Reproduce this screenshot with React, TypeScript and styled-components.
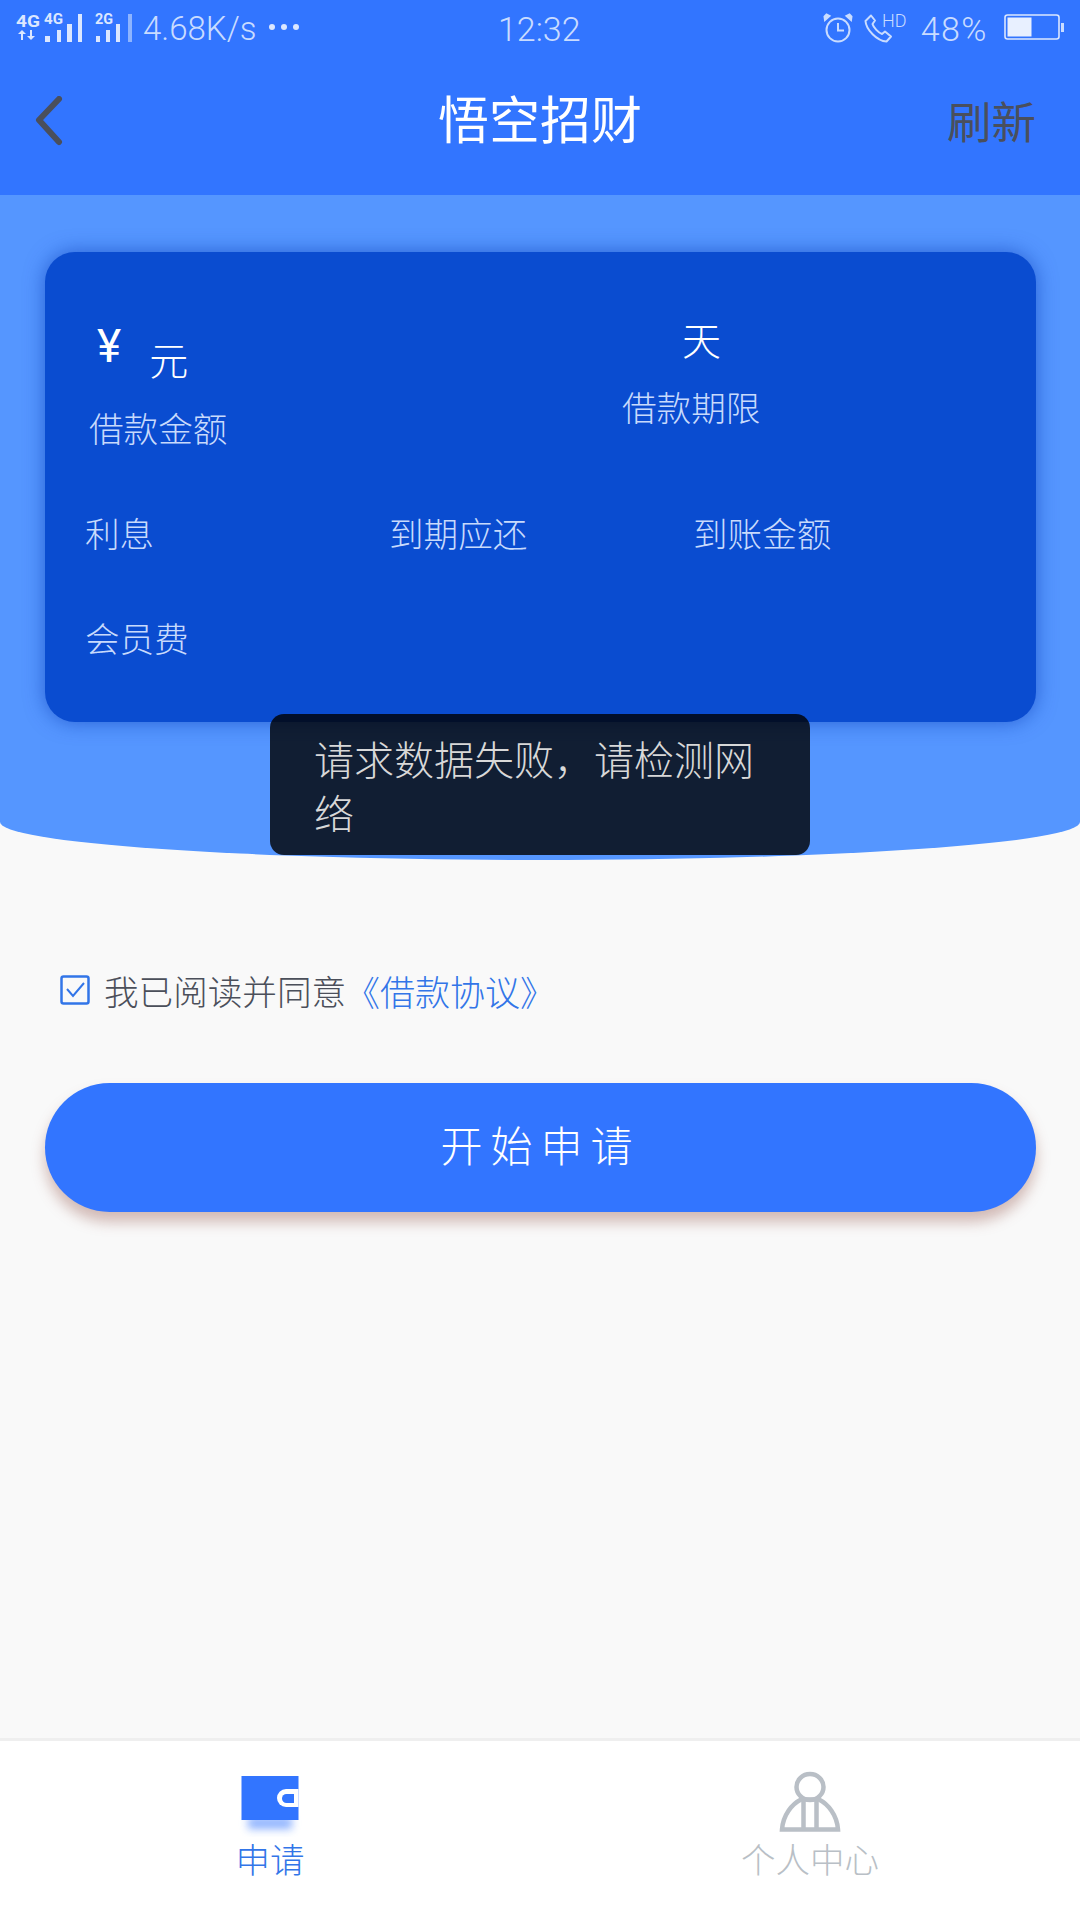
import React from 'react';
import styled, { createGlobalStyle } from 'styled-components';

const Global = createGlobalStyle`
  html, body { margin: 0; padding: 0; background: #f9f9f9; }
  body { font-family: "Noto Sans CJK SC", "Noto Sans", sans-serif; font-weight: 300; }
  * { box-sizing: border-box; }
`;
const Page = styled.div`
  position: relative; width: 1080px; height: 1920px; overflow: hidden;
  display: flex; flex-direction: column; background: #f9f9f9;
`;
const Header = styled.header`
  height: 195px; flex: none; background: #3275ff; display: flex; flex-direction: column;
`;
const StatusBar = styled.div`
  height: 58px; position: relative; display: flex; align-items: center; justify-content: space-between;
  padding: 0 16px 0 14px; color: #c9dcff; font-family: Roboto, sans-serif; font-size: 33px; font-weight: 300;
`;
const StatusGroup = styled.div`
  display: flex; align-items: center;
`;
const Speed = styled.span`
  margin-left: 9px; line-height: 58px; white-space: nowrap;
`;
const Clock = styled.span`
  position: absolute; left: 498px; top: 0; line-height: 58px; font-size: 34px;
`;
const Percent = styled.span`
  margin: 0 16px 0 13px; line-height: 58px; font-size: 34px; letter-spacing: 1.500px;
`;
const Toolbar = styled.div`
  flex: 1; display: flex; align-items: center; justify-content: space-between; padding: 0 44px 12px 34px; position: relative;
`;
const Title = styled.h1`
  position: absolute; left: 0; right: 0; top: 0; margin: 0; text-align: center; color: #fff;
  font-size: 51px; font-weight: 400; line-height: 118px;
`;
const Refresh = styled.span`
  font-size: 44.500px; color: #4a4f5c; font-weight: 400; line-height: 1;
`;
const Hero = styled.section`
  flex: none; height: 665px; padding: 57px 44px 0 45px; background: #5596ff;
  border-radius: 0 0 50% 50% / 0 0 38px 38px;
`;
const Card = styled.div`
  height: 470px; background: #0a4cd0; border-radius: 30px; box-shadow: 0 0 20px rgba(10, 60, 180, .6);
  padding: 68px 40px 0; color: #c8dafc; font-size: 34.600px;
`;
const TopRow = styled.div`
  display: flex; height: 153px;
`;
const AmountCol = styled.div`
  width: 537px; padding-left: 4px;
`;
const TermCol = styled.div`
  flex: 1; display: flex; flex-direction: column;
`;
const Value = styled.div<{ $fit?: boolean }>`
  display: flex; color: #fff; align-items: flex-start; height: ${p => (p.$fit ? 'auto' : '72px')};
`;
const Yen = styled.span`
  font-size: 46px; line-height: 52px; margin: 0 28px 0 8px; font-family: Roboto, sans-serif; font-weight: 400;
`;
const Unit = styled.span<{ $top: number; $left: number }>`
  font-size: 39px; line-height: 44px; margin-top: ${p => p.$top}px; margin-left: ${p => p.$left}px;
`;
const Label = styled.div<{ $offset?: number }>`
  line-height: 44px; white-space: nowrap; margin-top: ${p => p.$offset ?? 0}px;
`;
const InfoGrid = styled.div`
  display: grid; grid-template-columns: repeat(3, 304px); row-gap: 61px; margin-top: 37px;
`;
const Agreement = styled.div`
  display: flex; align-items: center; margin: 108px 0 0 60px; height: 44px; font-size: 34.600px; color: #4b4f5a; white-space: nowrap;
`;
const Check = styled.svg`
  width: 30px; height: 30px; margin-right: 14px; flex: none;
`;
const Link = styled.span`
  color: #3275e8; margin-left: -1px; font-size: 35px; font-weight: 300;
`;
const Button = styled.button`
  display: block; width: 991px; height: 129px; margin: 71px 0 0 45px; border: 0; border-radius: 65px; padding: 0 0 8px;
  background: #3275ff; color: #fff; font: 300 42px "Noto Sans CJK SC", sans-serif; letter-spacing: 8px;
  box-shadow: 0 10px 14px rgba(150, 90, 80, .4);
`;
const Toast = styled.div`
  position: absolute; left: 270px; top: 714px; width: 540px; height: 141px; padding: 17px 44px;
  background: rgba(0, 0, 0, .8); border-radius: 14px; color: #d8d8d8; font-size: 40px; line-height: 54px;
`;
const Nav = styled.nav`
  margin-top: auto; height: 182px; background: #fff; border-top: 3px solid #efefef; display: grid; grid-template-columns: 1fr 1fr; flex: none;
`;
const NavItem = styled.div<{ $active?: boolean }>`
  display: flex; flex-direction: column; align-items: center; padding-top: 30px;
  color: ${p => (p.$active ? '#3275e8' : '#b9bfc6')}; font-size: 34.500px;
`;
const NavIcon = styled.svg`
  width: 80px; height: 62px; flex: none; overflow: visible;
`;
const NavLabel = styled.span`
  line-height: 44px; margin-top: 3px; white-space: nowrap;
`;
const StatusSvg = styled.svg<{ $top?: number; $left?: number }>`
  flex: none; overflow: visible; margin-top: ${p => p.$top ?? 0}px; margin-left: ${p => p.$left ?? 0}px;
`;

const SignalIcon = () => (
  <StatusSvg width="120" height="30" viewBox="0 0 120 30" $top={-2}>
    <g fill="#dbe7ff" fontFamily="Roboto, sans-serif" fontWeight="700">
      <text x="2" y="14" fontSize="16" textLength="24" lengthAdjust="spacingAndGlyphs">4G</text>
      <text x="30" y="11" fontSize="14" textLength="19" lengthAdjust="spacingAndGlyphs">4G</text>
      <text x="81" y="11" fontSize="14" textLength="18" lengthAdjust="spacingAndGlyphs">2G</text>
      <path d="M7 27v-6H4l4-4 4 4H9v6zM16 17v6h-3l4 4 4-4h-3v-6z" />
      <rect x="31" y="23" width="5" height="6" />
      <rect x="43" y="17" width="4" height="12" />
      <rect x="53" y="11" width="5" height="18" />
      <rect x="64" y="1" width="4" height="28" />
      <rect x="82" y="23" width="4" height="6" />
      <rect x="92" y="17" width="4" height="12" />
      <rect x="102" y="11" width="4" height="18" />
      <rect x="114" y="1" width="4" height="28" opacity=".55" />
    </g>
  </StatusSvg>
);
const Dots = () => (
  <StatusSvg width="32" height="8" viewBox="0 0 32 8" $left={11} $top={-5}>
    <g fill="#dbe7ff"><circle cx="4" cy="4" r="3" /><circle cx="16" cy="4" r="3" /><circle cx="28" cy="4" r="3" /></g>
  </StatusSvg>
);
const AlarmIcon = () => (
  <StatusSvg width="30" height="30" viewBox="0 0 30 30" fill="none" stroke="#c9dcff" strokeWidth="2" $top={-3}>
    <circle cx="15" cy="17" r="11.500" />
    <path d="M15 10v7.500h6" />
    <path d="M2 7 6.500 3 3.500 1.500 1.500 3.500zM28 7l-4.500-4 3-1.500 2 2z" fill="#c9dcff" />
  </StatusSvg>
);
const CallIcon = () => (
  <StatusSvg width="44" height="32" viewBox="0 0 44 32" $left={11}>
    <path d="M1.500 8 7 2.500l4 5-2.500 3.500c1 3.500 6 9 9.500 10l3-2.500 6 5-4.500 5C13 28 2 16.500 1.500 8z" fill="none" stroke="#c9dcff" strokeWidth="2" strokeLinejoin="round" />
    <text x="18" y="14" fontFamily="Roboto, sans-serif" fontSize="18" fill="#c9dcff" fontWeight="300">HD</text>
  </StatusSvg>
);
const Battery = () => (
  <StatusSvg width="60" height="26" viewBox="0 0 60 26" $top={-5}>
    <rect x="1" y="1" width="54" height="24" rx="2.500" fill="none" stroke="#dbe7ff" strokeWidth="1.600" />
    <rect x="3.500" y="3.500" width="24" height="19" fill="#e8f0ff" />
    <rect x="57" y="9" width="3" height="9" fill="#c9dcff" />
  </StatusSvg>
);
const BackIcon = () => (
  <svg width="30" height="50" viewBox="0 0 30 50" fill="none" stroke="#4a4f5c" strokeWidth="6" strokeLinecap="round" strokeLinejoin="round">
    <path d="M25 3 5 24l20 22" />
  </svg>
);

export default function App() {
  return (
    <Page>
      <Global />
      <Header>
        <StatusBar>
          <StatusGroup>
            <SignalIcon />
            <Speed>4.68K/s</Speed>
            <Dots />
          </StatusGroup>
          <Clock>12:32</Clock>
          <StatusGroup>
            <AlarmIcon />
            <CallIcon />
            <Percent>48%</Percent>
            <Battery />
          </StatusGroup>
        </StatusBar>
        <Toolbar>
          <Title>悟空招财</Title>
          <BackIcon />
          <Refresh>刷新</Refresh>
        </Toolbar>
      </Header>
      <Hero>
        <Card>
          <TopRow>
            <AmountCol>
              <Value>
                <Yen>¥</Yen>
                <Unit $top={16} $left={0}>元</Unit>
              </Value>
              <Label $offset={13}>借款金额</Label>
            </AmountCol>
            <TermCol>
              <Value $fit>
                <Unit $top={-4} $left={60}>天</Unit>
              </Value>
              <Label $offset={24}>借款期限</Label>
            </TermCol>
          </TopRow>
          <InfoGrid>
            <Label>利息</Label>
            <Label>到期应还</Label>
            <Label>到账金额</Label>
            <Label>会员费</Label>
          </InfoGrid>
        </Card>
      </Hero>
      <Agreement>
        <Check viewBox="0 0 30 30" fill="none">
          <rect x="1.500" y="1.500" width="27" height="27" rx="2" stroke="#3275e8" strokeWidth="2.500" />
          <path d="M7 14l6 7 11-13" stroke="#3275e8" strokeWidth="2" />
        </Check>
        我已阅读并同意<Link>《借款协议》</Link>
      </Agreement>
      <Button>开始申请</Button>
      <Nav>
        <NavItem $active>
          <NavIcon viewBox="0 0 80 62">
            <defs>
              <filter id="glow" x="-30%" y="-60%" width="160%" height="220%"><feGaussianBlur stdDeviation="4" /></filter>
            </defs>
            <rect x="18" y="46" width="44" height="12" fill="#3275ff" opacity=".55" filter="url(#glow)" />
            <rect x="11.500" y="5" width="57" height="44" fill="#3275ff" />
            <path d="M68.500 18H56a9 9 0 0 0 0 18h12.500z" fill="#fff" />
            <path d="M64 23H56.500a4.500 4.500 0 0 0 0 9H64z" fill="#3275ff" />
          </NavIcon>
          <NavLabel>申请</NavLabel>
        </NavItem>
        <NavItem>
          <NavIcon viewBox="0 0 80 62" fill="none" stroke="#b9bfc6" strokeWidth="4.500">
            <ellipse cx="40" cy="16" rx="13.500" ry="13" />
            <path d="M12 58.500C13 44 22 33 31 28.500h18C58 33 67 44 68 58.500z" />
            <path d="M33.500 28.500v30M46.500 28.500v30" />
          </NavIcon>
          <NavLabel>个人中心</NavLabel>
        </NavItem>
      </Nav>
      <Toast>请求数据失败，请检测网络</Toast>
    </Page>
  );
}
